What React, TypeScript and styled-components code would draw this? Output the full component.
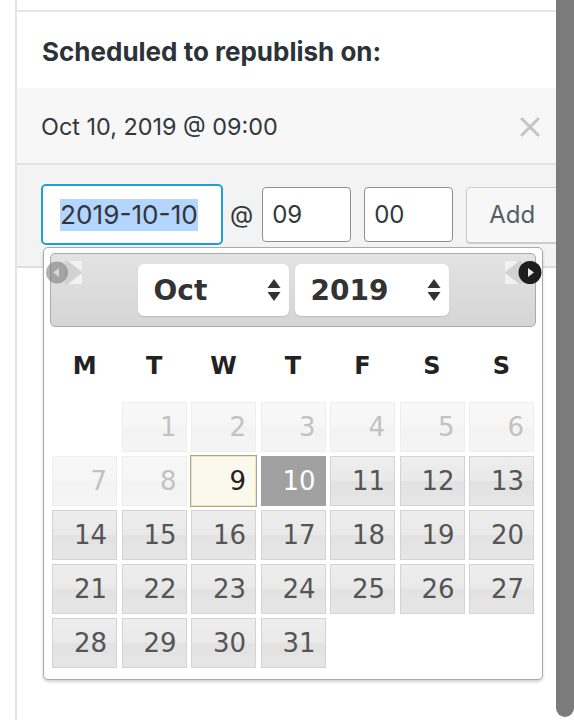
import React from "react";
import styled, { createGlobalStyle, css } from "styled-components";

const Global = createGlobalStyle`
  html, body { margin: 0; padding: 0; background: #fff; overflow: hidden; }
  body { font-family: Inter, "Liberation Sans", sans-serif; }
  * { box-sizing: border-box; }
`;

const UI_FONT = `Inter, "Liberation Sans", sans-serif`;
const CAL_FONT = `"DejaVu Sans", Verdana, sans-serif`;

const Stage = styled.div`
  position: relative;
  width: 574px;
  height: 720px;
  overflow: hidden;
  background: #fff;
`;

const Panel = styled.div`
  margin-left: 15px;
  width: 600px;
  height: 720px;
  border-left: 2px solid #e5e5e5;
  display: flex;
  flex-direction: column;
`;

const TopStub = styled.div`
  height: 12px;
  border-bottom: 2px solid #e6e6e6;
`;

const Heading = styled.h2`
  margin: 0;
  height: 76px;
  padding: 3px 0 0 25px;
  display: flex;
  align-items: center;
  font: 700 26px ${UI_FONT};
  color: #2c3338;
`;

const ScheduledRow = styled.div`
  height: 77px;
  padding: 2px 75px 0 24px;
  display: flex;
  align-items: center;
  justify-content: space-between;
  background: #f7f7f7;
  border-bottom: 2px solid #e2e2e2;
  font: 400 23.4px ${UI_FONT};
  color: #32373c;
`;

const CloseIcon = styled.svg`
  width: 20px;
  height: 20px;
  display: block;
`;

const FormRow = styled.div`
  display: flex;
  align-items: center;
  height: 103px;
  padding: 0 0 2px 24px;
  background: #f3f3f3;
  border-bottom: 2px solid #dedede;
  font: 400 24px ${UI_FONT};
  color: #32373c;
`;

const DateField = styled.div`
  width: 182px;
  height: 61px;
  padding-left: 17px;
  display: flex;
  align-items: center;
  background: #fff;
  border: 2px solid #1ea0d7;
  border-radius: 5px;
  font-size: 26.2px;
`;

const Selection = styled.span`
  background: #b4d5fe;
  line-height: 32px;
`;

const At = styled.span`
  margin: 0 9px 0 7px;
`;

const TimeField = styled.div`
  width: 89px;
  height: 55px;
  padding-left: 9px;
  display: flex;
  align-items: center;
  background: #fff;
  border: 1px solid #8c8f94;
  border-radius: 4px;
  & + & {
    margin-left: 13px;
  }
`;

const AddButton = styled.button`
  margin-left: 13px;
  width: 110px;
  height: 56px;
  padding: 0 0 0 22px;
  text-align: left;
  background: #f7f7f7;
  border: 1px solid #cccccc;
  border-radius: 4px;
  box-shadow: 0 1px 0 #cccccc;
  font: 400 24px ${UI_FONT};
  color: #555d66;
`;

const Scrollbar = styled.div`
  position: absolute;
  top: 0;
  right: 0;
  width: 18px;
  height: 717px;
  background: #7b7b7b;
  border-radius: 0 0 9px 9px;
`;

/* ---------- datepicker ---------- */

const Picker = styled.div`
  position: absolute;
  top: 247px;
  left: 43px;
  width: 500px;
  padding: 5px 6px 9px 6px;
  background: #fff;
  border: 1px solid #aaaaaa;
  border-radius: 5px;
  box-shadow: 0 2px 3px rgba(0, 0, 0, 0.18);
  font-family: ${CAL_FONT};
`;

const PickerHeader = styled.div`
  position: relative;
  height: 74px;
  display: flex;
  align-items: center;
  justify-content: center;
  gap: 6px;
  background: linear-gradient(#e3e3e3, #d5d5d5);
  border: 1px solid #aaaaaa;
  border-radius: 5px;
`;

const NavButton = styled.svg<{ $side: "prev" | "next" }>`
  position: absolute;
  top: 5px;
  width: 37px;
  height: 27px;
  ${(p) =>
    p.$side === "prev"
      ? css`
          left: -6px;
        `
      : css`
          right: -7px;
        `}
`;

const FakeSelect = styled.div<{ $w: number }>`
  width: ${(p) => p.$w}px;
  height: 52px;
  padding: 0 0 0 16px;
  display: flex;
  align-items: center;
  justify-content: space-between;
  background: #fff;
  border-radius: 6px;
  box-shadow: 0 1px 1px rgba(0, 0, 0, 0.12);
  font: 700 28px ${CAL_FONT};
  color: #333;
`;

const Updown = styled.svg`
  width: 14px;
  height: 22px;
  margin-right: 8px;
  display: block;
`;

const WeekRow = styled.div`
  height: 73px;
  padding-top: 4px;
  display: grid;
  grid-template-columns: repeat(7, 1fr);
  align-items: center;
  font: 700 24px ${CAL_FONT};
  color: #222;
  text-align: center;
`;

const DayGrid = styled.div`
  padding: 2px 2px 2px 2px;
  display: grid;
  grid-template-columns: repeat(7, 1fr);
  grid-auto-rows: 50px;
  column-gap: 4.5px;
  row-gap: 4px;
`;

type Variant = "empty" | "default" | "disabled" | "today" | "active";

const variantStyles: Record<Variant, ReturnType<typeof css>> = {
  empty: css`
    background: transparent;
    border-color: transparent;
  `,
  default: css`
    background: linear-gradient(#eeeeee 0%, #e9e9e9 50%, #e2e2e2 51%, #e6e6e6 100%);
    border-color: #d3d3d3;
    color: #555555;
  `,
  disabled: css`
    background: linear-gradient(#f8f8f8 0%, #f6f6f6 50%, #f3f3f3 51%, #f5f5f5 100%);
    border-color: #eeeeee;
    color: #c2c2c2;
  `,
  today: css`
    background: #fbf9ee;
    border-color: #f6e7a0;
    outline: 1px solid #a5a5a5;
    color: #222222;
  `,
  active: css`
    background: #a1a1a1;
    border-color: #a1a1a1;
    color: #ffffff;
  `,
};

const Day = styled.div<{ $v: Variant }>`
  padding-right: 9px;
  display: flex;
  align-items: center;
  justify-content: flex-end;
  border: 1px solid transparent;
  font: 400 26px ${CAL_FONT};
  ${(p) => variantStyles[p.$v]}
`;

const weekdays = ["M", "T", "W", "T", "F", "S", "S"];

function dayVariant(d: number): Variant {
  if (d < 9) return "disabled";
  if (d === 9) return "today";
  if (d === 10) return "active";
  return "default";
}

export default function App() {
  const days: (number | null)[] = [null];
  for (let d = 1; d <= 31; d++) days.push(d);

  return (
    <Stage>
      <Global />
      <Panel>
        <TopStub />
        <Heading>Scheduled to republish on:</Heading>
        <ScheduledRow>
          <span>Oct 10, 2019 @ 09:00</span>
          <CloseIcon viewBox="0 0 20 20">
            <path d="M2 2 L18 18 M18 2 L2 18" stroke="#c4c4c4" strokeWidth="3" strokeLinecap="round" />
          </CloseIcon>
        </ScheduledRow>
        <FormRow>
          <DateField>
            <Selection>2019-10-10</Selection>
          </DateField>
          <At>@</At>
          <TimeField>09</TimeField>
          <TimeField>00</TimeField>
          <AddButton>Add</AddButton>
        </FormRow>
      </Panel>

      <Picker>
        <PickerHeader>
          <NavButton $side="prev" viewBox="0 0 37 27">
            <rect x="20" y="2" width="17" height="23" fill="#d2d2d2" />
            <polygon points="23,2 37,2 37,13" fill="#f2f2f2" />
            <polygon points="23,25 37,25 37,14" fill="#f2f2f2" />
            <circle cx="12" cy="13.5" r="11" fill="#7c7c7c" opacity="0.6" />
            <polygon points="8,13.5 14,9 14,18" fill="#d6d6d6" />
          </NavButton>
          <FakeSelect $w={151}>
            Oct
            <Updown viewBox="0 0 14 22">
              <polygon points="7,0 13.5,9 0.5,9" fill="#333" />
              <polygon points="7,22 13.5,13 0.5,13" fill="#333" />
            </Updown>
          </FakeSelect>
          <FakeSelect $w={154}>
            2019
            <Updown viewBox="0 0 14 22">
              <polygon points="7,0 13.5,9 0.5,9" fill="#333" />
              <polygon points="7,22 13.5,13 0.5,13" fill="#333" />
            </Updown>
          </FakeSelect>
          <NavButton $side="next" viewBox="0 0 37 27">
            <rect x="0" y="2" width="17" height="23" fill="#d2d2d2" />
            <polygon points="0,2 14,2 0,13" fill="#f2f2f2" />
            <polygon points="0,25 14,25 0,14" fill="#f2f2f2" />
            <circle cx="25" cy="13.5" r="11.5" fill="#1e1e1e" />
            <polygon points="29,13.5 23,9 23,18" fill="#e8e8e8" />
          </NavButton>
        </PickerHeader>

        <WeekRow>
          {weekdays.map((w, i) => (
            <span key={i}>{w}</span>
          ))}
        </WeekRow>

        <DayGrid>
          {days.map((d, i) =>
            d === null ? (
              <Day key={i} $v="empty" />
            ) : (
              <Day key={i} $v={dayVariant(d)}>
                {d}
              </Day>
            )
          )}
        </DayGrid>
      </Picker>

      <Scrollbar />
    </Stage>
  );
}
